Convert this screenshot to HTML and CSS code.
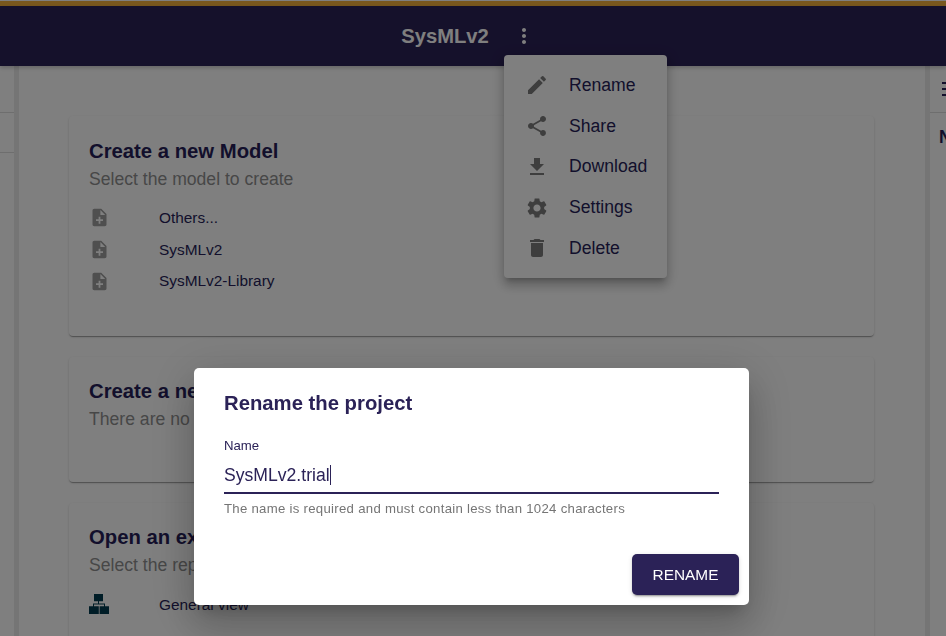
FILE: index.html

```html
<!doctype html>
<html>
<head>
  <title>SysMLv2 - Project</title>
  <meta charset="utf-8">
  <link rel="stylesheet" href="styles.css">
</head>
<body>
  <div class="app">
    <div class="stripe"></div>
    <div class="navbar">
      <span class="project-name">SysMLv2</span>
      <div class="more-btn">
        <svg class="icon" viewBox="0 0 24 24"><path d="M12 8c1.1 0 2-.9 2-2s-.9-2-2-2-2 .9-2 2 .9 2 2 2zm0 2c-1.100 0-2 .9-2 2s.9 2 2 2 2-.9 2-2-.9-2-2-2zm0 6c-1.100 0-2 .9-2 2s.9 2 2 2 2-.9 2-2-.9-2-2-2z"/></svg>
      </div>
    </div>
    <div class="workbench">
      <div class="left-panel">
        <div class="panel-row"></div>
        <div class="panel-row"></div>
      </div>
      <div class="splitter"></div>
      <div class="center">
        <div class="card card-models">
          <h2>Create a new Model</h2>
          <p class="sub">Select the model to create</p>
          <ul class="items">
            <li>
              <svg class="icon doc" viewBox="0 0 24 24"><path d="M14 2H6c-1.100 0-1.990.9-1.990 2L4 20c0 1.100.89 2 1.990 2H18c1.100 0 2-.9 2-2V8l-6-6zm2 14h-3v3h-2v-3H8v-2h3v-3h2v3h3v2zm-3-7V3.500L18.500 9H13z"/></svg>
              <span>Others...</span>
            </li>
            <li>
              <svg class="icon doc" viewBox="0 0 24 24"><path d="M14 2H6c-1.100 0-1.990.9-1.990 2L4 20c0 1.100.89 2 1.990 2H18c1.100 0 2-.9 2-2V8l-6-6zm2 14h-3v3h-2v-3H8v-2h3v-3h2v3h3v2zm-3-7V3.500L18.500 9H13z"/></svg>
              <span>SysMLv2</span>
            </li>
            <li>
              <svg class="icon doc" viewBox="0 0 24 24"><path d="M14 2H6c-1.100 0-1.990.9-1.990 2L4 20c0 1.100.89 2 1.990 2H18c1.100 0 2-.9 2-2V8l-6-6zm2 14h-3v3h-2v-3H8v-2h3v-3h2v3h3v2zm-3-7V3.500L18.500 9H13z"/></svg>
              <span>SysMLv2-Library</span>
            </li>
          </ul>
        </div>
        <div class="card card-repr">
          <h2>Create a new Representation</h2>
          <p class="sub">There are no representations</p>
        </div>
        <div class="card card-open">
          <h2>Open an existing Representation</h2>
          <p class="sub">Select the representation to open</p>
          <ul class="items">
            <li>
              <svg class="icon tree" viewBox="0 0 20 20"><path d="M5 0h9v7.300H5zM9 7.300h1v2.200h6v2.800h-1v-1.800H5v1.800H4V9.500h5zM0 12.300h9.800V20H0zM10.600 12.300H20V20h-9.400z"/></svg>
              <span>General view</span>
            </li>
          </ul>
        </div>
      </div>
      <div class="splitter"></div>
      <div class="right-panel">
        <div class="panel-row">
          <svg class="icon menu-lines" viewBox="0 0 24 24"><path d="M0 2h24v2H0zM0 8h24v2H0zM0 14h24v2H0z"/></svg>
        </div>
        <div class="details">N</div>
      </div>
    </div>

    <div class="menu">
      <div class="menu-item">
        <svg class="icon" viewBox="0 0 24 24"><path d="M3 17.250V21h3.750L17.810 9.940l-3.750-3.750L3 17.250zM20.710 7.040c.39-.39.39-1.020 0-1.410l-2.340-2.340a.996.996 0 0 0-1.410 0l-1.830 1.830 3.750 3.750 1.830-1.830z"/></svg>
        <span>Rename</span>
      </div>
      <div class="menu-item">
        <svg class="icon" viewBox="0 0 24 24"><path d="M18 16.080c-.76 0-1.440.3-1.960.77L8.910 12.700c.05-.23.09-.46.09-.7s-.04-.47-.09-.7l7.050-4.110c.54.5 1.250.81 2.040.81 1.660 0 3-1.340 3-3s-1.340-3-3-3-3 1.340-3 3c0 .24.04.47.09.7L8.040 9.810C7.500 9.310 6.790 9 6 9c-1.660 0-3 1.340-3 3s1.340 3 3 3c.79 0 1.500-.31 2.040-.81l7.120 4.160c-.05.21-.08.43-.08.65 0 1.610 1.310 2.920 2.920 2.920 1.610 0 2.920-1.310 2.920-2.920s-1.310-2.920-2.920-2.920z"/></svg>
        <span>Share</span>
      </div>
      <div class="menu-item">
        <svg class="icon" viewBox="0 0 24 24"><path d="M19 9h-4V3H9v6H5l7 7 7-7zM5 18v2h14v-2H5z"/></svg>
        <span>Download</span>
      </div>
      <div class="menu-item">
        <svg class="icon" viewBox="0 0 24 24"><path d="M19.140 12.940c.04-.3.06-.61.06-.94 0-.32-.02-.64-.07-.94l2.030-1.580c.18-.14.23-.41.12-.61l-1.920-3.320c-.12-.22-.37-.29-.59-.22l-2.390.96c-.5-.38-1.030-.7-1.620-.94l-.36-2.540c-.04-.24-.24-.41-.48-.41h-3.840c-.24 0-.43.17-.47.41l-.36 2.540c-.59.24-1.130.57-1.620.94l-2.390-.96c-.22-.08-.47 0-.59.22L2.740 8.870c-.12.21-.08.47.12.61l2.030 1.580c-.05.3-.09.63-.09.94s.02.64.07.94l-2.030 1.580c-.18.14-.23.41-.12.61l1.920 3.320c.12.22.37.29.59.22l2.390-.96c.5.38 1.030.7 1.620.94l.36 2.540c.05.24.24.41.48.41h3.840c.24 0 .44-.17.47-.41l.36-2.540c.59-.24 1.130-.56 1.620-.94l2.390.96c.22.08.47 0 .59-.22l1.920-3.320c.12-.22.07-.47-.12-.61l-2.010-1.580zM12 15.600c-1.980 0-3.600-1.620-3.600-3.600s1.620-3.600 3.600-3.600 3.600 1.620 3.600 3.600-1.620 3.600-3.600 3.600z"/></svg>
        <span>Settings</span>
      </div>
      <div class="menu-item">
        <svg class="icon" viewBox="0 0 24 24"><path d="M6 19c0 1.100.9 2 2 2h8c1.100 0 2-.9 2-2V7H6v12zM19 4h-3.500l-1-1h-5l-1 1H5v2h14V4z"/></svg>
        <span>Delete</span>
      </div>
    </div>
  </div>

  <div class="backdrop">
    <div class="dialog">
      <h3>Rename the project</h3>
      <label class="field-label">Name</label>
      <div class="field-input"><span>SysMLv2.trial</span><span class="caret"></span></div>
      <p class="helper">The name is required and must contain less than 1024 characters</p>
      <div class="actions">
        <button class="rename-btn">RENAME</button>
      </div>
    </div>
  </div>
</body>
</html>
```

FILE: styles.css

```css
* {
  box-sizing: border-box;
}
body {
  margin: 0;
  font-family: "Liberation Sans", Arial, sans-serif;
  color: #261e58;
  background: #fff;
  overflow: hidden;
}
.icon {
  display: block;
  width: 24px;
  height: 24px;
  fill: currentColor;
  flex-shrink: 0;
}
.app {
  position: relative;
  display: flex;
  flex-direction: column;
  height: 636px;
  overflow: hidden;
}
.stripe {
  height: 6px;
  border-top: 1px solid #fff;
  background: #f2b13c;
  flex-shrink: 0;
}
.navbar {
  position: relative;
  z-index: 2;
  display: flex;
  align-items: center;
  justify-content: center;
  height: 60px;
  flex-shrink: 0;
  background: #2b2257;
  color: #fff;
  box-shadow: 0 2px 4px rgba(0, 0, 0, 0.2);
}
.project-name {
  font-size: 20.2px;
  font-weight: bold;
  margin-right: 16px;
}
.more-btn {
  display: flex;
  justify-content: center;
  width: 40px;
  padding-right: 2px;
}

.workbench {
  display: flex;
  flex: 1;
  min-height: 0;
}
.left-panel {
  width: 14px;
  flex-shrink: 0;
}
.right-panel {
  width: 16px;
  flex-shrink: 0;
  overflow: hidden;
}
.panel-row {
  height: 40px;
  border-bottom: 1px solid #ddd;
}
.left-panel .panel-row:first-child {
  height: 47px;
}
.right-panel .panel-row {
  height: 47px;
  padding: 14px 0 0 12px;
}
.menu-lines {
  color: #261e58;
}
.details {
  padding: 14px 0 0 9px;
  font-size: 17.6px;
  line-height: 20px;
  font-weight: bold;
}
.splitter {
  width: 5px;
  flex-shrink: 0;
  background: #ebebeb;
}
.center {
  flex: 1;
  min-width: 0;
  padding: 50px 51px 0 50px;
  overflow: hidden;
}

.card {
  margin-bottom: 21px;
  padding: 24px 20px 0;
  border-radius: 4px;
  background: #fff;
  box-shadow: 0 2px 1px -1px rgba(0, 0, 0, 0.2), 0 1px 1px 0 rgba(0, 0, 0, 0.14), 0 1px 3px 0 rgba(0, 0, 0, 0.12);
}
.card-models {
  height: 220px;
}
.card-repr {
  height: 125px;
  padding-top: 23px;
}
.card-open {
  height: 200px;
  padding-top: 23px;
}
.card h2 {
  margin: 0;
  font-size: 20.3px;
  line-height: 23px;
  font-weight: bold;
}
.sub {
  margin: 7px 0 0;
  font-size: 17.6px;
  line-height: 18px;
  color: #8f8f8f;
}
.items {
  list-style: none;
  margin: 14px 0 0;
  padding: 0;
}
.card-open .items {
  margin-top: 15px;
}
.items li {
  display: flex;
  align-items: center;
  height: 31.75px;
  font-size: 15.4px;
}
.doc {
  width: 21px;
  height: 21px;
  margin-right: 49px;
  color: #9e9e9e;
}
.tree {
  width: 20px;
  height: 20px;
  margin: -2px 50px 0 0;
  color: #003b4f;
}

.menu {
  position: absolute;
  z-index: 3;
  left: 504px;
  top: 55px;
  width: 163px;
  padding: 10px 0 9px;
  border-radius: 4px;
  background: #fff;
  box-shadow: 0 5px 5px -3px rgba(0, 0, 0, 0.2), 0 8px 10px 1px rgba(0, 0, 0, 0.14), 0 3px 14px 2px rgba(0, 0, 0, 0.12);
}
.menu-item {
  display: flex;
  align-items: center;
  height: 40.75px;
  padding-left: 21px;
  font-size: 17.6px;
}
.menu-item .icon {
  margin-right: 20px;
  color: #7c7c7c;
}

.backdrop {
  position: fixed;
  z-index: 10;
  inset: 0;
  display: flex;
  justify-content: center;
  align-items: flex-start;
  padding: 368px 3px 0 0;
  background: rgba(0, 0, 0, 0.5);
}
.dialog {
  width: 555px;
  height: 237px;
  padding: 24px 30px 0;
  border-radius: 5px;
  background: #fff;
  color: #2b2257;
  box-shadow: 0 11px 15px -7px rgba(0, 0, 0, 0.2), 0 24px 38px 3px rgba(0, 0, 0, 0.14), 0 9px 46px 8px rgba(0, 0, 0, 0.12);
}
.dialog h3 {
  margin: 0;
  font-size: 20.3px;
  line-height: 23px;
  font-weight: bold;
}
.field-label {
  display: block;
  margin-top: 23px;
  font-size: 13.2px;
  line-height: 16px;
}
.field-input {
  display: flex;
  align-items: center;
  height: 40px;
  padding-top: 4px;
  border-bottom: 2px solid #2b2257;
  font-size: 17.6px;
}
.caret {
  width: 1px;
  height: 20px;
  background: #2b2257;
}
.helper {
  margin: 7px 0 0;
  font-size: 13.2px;
  line-height: 16px;
  letter-spacing: 0.28px;
  color: #757575;
}
.actions {
  display: flex;
  justify-content: flex-end;
  margin: 37px -20px 0 0;
}
.rename-btn {
  width: 107px;
  height: 41px;
  padding: 0;
  border: 0;
  border-radius: 5px;
  background: #2b2257;
  color: #fff;
  font-family: inherit;
  font-size: 15.4px;
  box-shadow: 0 3px 1px -2px rgba(0, 0, 0, 0.2), 0 2px 2px 0 rgba(0, 0, 0, 0.14), 0 1px 5px 0 rgba(0, 0, 0, 0.12);
}
```
